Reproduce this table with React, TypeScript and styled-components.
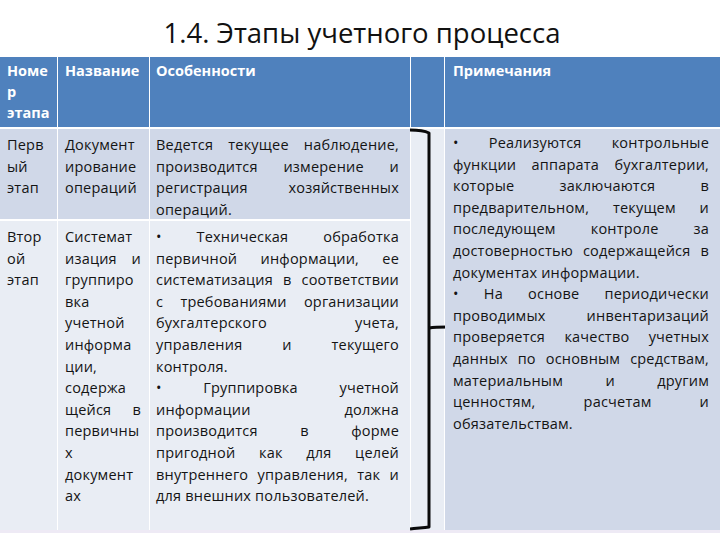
import React from "react";
import styled, { createGlobalStyle } from "styled-components";

const Global = createGlobalStyle`
  html, body { margin: 0; padding: 0; background: #ffffff; }
  body { font-family: "Open Sans", "Noto Sans", sans-serif; }
`;

const Page = styled.div`
  width: 720px;
  height: 540px;
  overflow: hidden;
  background: #ffffff;
  display: flex;
  flex-direction: column;
`;

const Title = styled.h1`
  margin: 0;
  box-sizing: border-box;
  height: 57px;
  padding-top: 16px;
  font-size: 27.5px;
  line-height: 34px;
  font-weight: 400;
  color: #111111;
  text-align: center;
  padding-left: 4px;
`;

const Table = styled.div`
  display: grid;
  grid-template-columns: 57px 91px 260px 33px 275px;
  grid-template-rows: 70px 90px 309px;
  column-gap: 1px;
  row-gap: 2px;
  background: #ffffff;
  box-shadow: 0 3px 0 #eeeaf5;
`;

const HeadCell = styled.div<{ $pl: number }>`
  background: #4f81bd;
  color: #ffffff;
  font-weight: 700;
  font-size: 14.5px;
  line-height: 21px;
  padding: 3px 1px 0 ${(p) => p.$pl}px;
  box-sizing: border-box;
`;

const Cell = styled.div<{ $tone: "dark" | "light"; $span?: number; $pl: number; $pr: number; $pt: number }>`
  position: relative;
  background: ${(p) => (p.$tone === "dark" ? "#d0d8e8" : "#e9edf4")};
  grid-row: span ${(p) => p.$span ?? 1};
  color: #141414;
  font-size: 14.5px;
  letter-spacing: 0.2px;
  line-height: 21.6px;
  padding: ${(p) => p.$pt}px ${(p) => p.$pr}px 0 ${(p) => p.$pl}px;
  box-sizing: border-box;
  min-width: 0;
`;

const Line = styled.span<{ $last?: boolean }>`
  display: block;
  text-align: justify;
  text-align-last: ${(p) => (p.$last ? "left" : "justify")};
`;

const BracketSvg = styled.svg`
  position: absolute;
  left: 0;
  top: 0;
  overflow: visible;
`;

type Paras = string[][];

const Text: React.FC<{ paras: Paras }> = ({ paras }) => (
  <>
    {paras.map((p, pi) =>
      p.map((l, li) => (
        <Line key={`${pi}-${li}`} $last={li === p.length - 1}>
          {l}
        </Line>
      ))
    )}
  </>
);

const Bracket = () => (
  <BracketSvg width="33" height="401" viewBox="0 0 33 401">
    <path
      d="M-1 1 C 6 1, 14 2, 18 4 L 18 398 C 12 399, 5 399, -1 400"
      fill="none"
      stroke="#0a0a0a"
      strokeWidth="3"
      strokeLinejoin="round"
    />
    <path d="M18 199 C 24 198, 30 198, 36 198" fill="none" stroke="#0a0a0a" strokeWidth="3.2" />
  </BracketSvg>
);

const heads: { text: string[]; pl: number }[] = [
  { text: ["Номе", "р", "этапа"], pl: 7 },
  { text: ["Название"], pl: 7 },
  { text: ["Особенности"], pl: 6 },
  { text: [""], pl: 6 },
  { text: ["Примечания"], pl: 8 },
];

export default function App() {
  return (
    <Page>
      <Global />
      <Title>1.4. Этапы учетного процесса</Title>
      <Table>
        {heads.map((h, i) => (
          <HeadCell key={i} $pl={h.pl}>
            {h.text.map((t, j) => (
              <div key={j}>{t}</div>
            ))}
          </HeadCell>
        ))}

        <Cell $tone="dark" $pl={7} $pr={1} $pt={5}>
          <Text paras={[["Перв", "ый", "этап"]]} />
        </Cell>
        <Cell $tone="dark" $pl={7} $pr={8} $pt={5}>
          <Text paras={[["Документ", "ирование", "операций"]]} />
        </Cell>
        <Cell $tone="dark" $pl={6} $pr={11} $pt={5}>
          <Text
            paras={[
              [
                "Ведется текущее наблюдение,",
                "производится измерение и",
                "регистрация хозяйственных",
                "операций.",
              ],
            ]}
          />
        </Cell>
        <Cell $tone="light" $span={2} $pl={0} $pr={0} $pt={0}>
          <Bracket />
        </Cell>
        <Cell $tone="dark" $span={2} $pl={8} $pr={11} $pt={3}>
          <Text
            paras={[
              [
                "•  Реализуются контрольные",
                "функции аппарата бухгалтерии,",
                "которые заключаются в",
                "предварительном, текущем и",
                "последующем контроле за",
                "достоверностью содержащейся в",
                "документах информации.",
              ],
              [
                "•  На основе периодически",
                "проводимых инвентаризаций",
                "проверяется качество учетных",
                "данных по основным средствам,",
                "материальным и другим",
                "ценностям, расчетам и",
                "обязательствам.",
              ],
            ]}
          />
        </Cell>

        <Cell $tone="light" $pl={7} $pr={1} $pt={5}>
          <Text paras={[["Втор", "ой", "этап"]]} />
        </Cell>
        <Cell $tone="light" $pl={7} $pr={8} $pt={5}>
          <Text
            paras={[
              [
                "Системат",
                "изация и",
                "группиро",
                "вка",
                "учетной",
                "информа",
                "ции,",
                "содержа",
                "щейся в",
                "первичны",
                "х",
                "документ",
                "ах",
              ],
            ]}
          />
        </Cell>
        <Cell $tone="light" $pl={6} $pr={11} $pt={5}>
          <Text
            paras={[
              [
                "•  Техническая обработка",
                "первичной информации, ее",
                "систематизация в соответствии",
                "с требованиями организации",
                "бухгалтерского учета,",
                "управления и текущего",
                "контроля.",
              ],
              [
                "•  Группировка учетной",
                "информации должна",
                "производится в форме",
                "пригодной как для целей",
                "внутреннего управления, так и",
                "для внешних пользователей.",
              ],
            ]}
          />
        </Cell>
      </Table>
    </Page>
  );
}
